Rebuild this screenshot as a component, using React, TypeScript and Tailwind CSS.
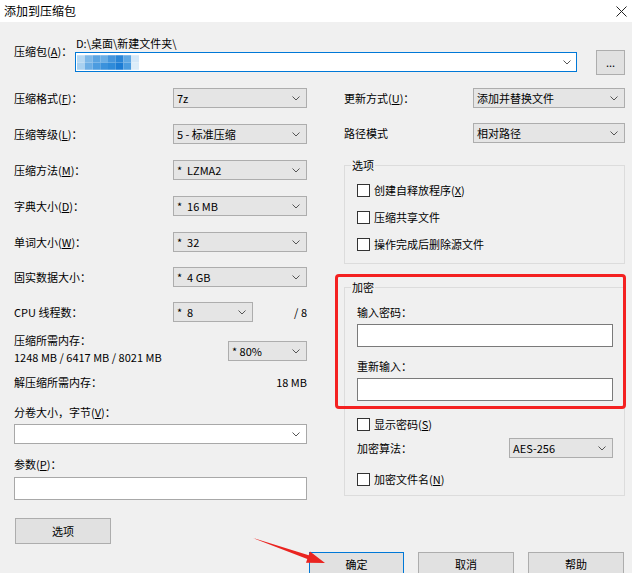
import React from 'react'

function Chevron() {
  return (
    <svg width="8" height="5" viewBox="0 0 8 5" className="shrink-0">
      <polyline points="0.5,0.5 4,4 7.5,0.5" fill="none" stroke="#555" strokeWidth="1" />
    </svg>
  )
}

function Select({ value, className }: { value: string; className: string }) {
  return (
    <div
      className={`flex h-[20px] items-center justify-between border border-[#adadad] bg-[#e5e5e5] pl-[3px] pr-[6px] ${className}`}
    >
      <span className="whitespace-pre">{value}</span>
      <Chevron />
    </div>
  )
}

function Check({ children }: { children: React.ReactNode }) {
  return (
    <div className="flex h-[14px] items-center">
      <span className="h-[13px] w-[13px] shrink-0 border border-[#333] bg-white" />
      <span className="ml-[4px]">{children}</span>
    </div>
  )
}

const mosaic = [
  ['#b6d8f2', '#7db8e8', '#5aa4e2', '#6aaee5', '#4596dd', '#2a86d8', '#5fa8e4', '#d4e8f8'],
  ['#a9d1f0', '#6caee5', '#4c9ce0', '#3b92dc', '#2f8bd9', '#1c7cd4', '#4a9ce0', '#dcedf9'],
]

function Mosaic() {
  return (
    <svg width="62" height="15" viewBox="0 0 64 15">
      {mosaic.map((row, r) =>
        row.map((c, i) => <rect key={`${r}-${i}`} x={i * 8} y={r * 7.5} width="8" height="7.5" fill={c} />)
      )}
    </svg>
  )
}

export default function App() {
  return (
    <div className="relative h-[573px] w-[632px] overflow-hidden bg-[#f0f0f0] font-['Noto_Sans_CJK_SC','Noto_Sans',sans-serif] text-[11px] text-black">
      {/* title bar */}
      <div className="flex h-[22px] items-center justify-between bg-white pl-[4px] pr-[5px] text-[12px]">
        <span>添加到压缩包</span>
        <svg width="11" height="11" viewBox="0 0 11 11">
          <path d="M0.5 0.5 L10.5 10.5 M10.5 0.5 L0.5 10.5" stroke="#222" strokeWidth="1" />
        </svg>
      </div>

      {/* archive path */}
      <div className="mt-[14px] flex pl-[14px]">
        <div className="w-[61px] pt-[8px] leading-[14px]">
          压缩包(<u>A</u>)：
        </div>
        <div className="w-[502px]">
          <div className="pl-[1px] leading-[14px]">{'D:\\桌面\\新建文件夹\\'}</div>
          <div className="mt-[2px] flex h-[20px] items-center justify-between border border-[#0078d7] bg-white pl-[1px] pr-[5px]">
            <Mosaic />
            <Chevron />
          </div>
        </div>
        <div className="ml-[19px] mt-[14px] flex h-[25px] w-[29px] items-center justify-center border border-[#adadad] bg-[#e1e1e1] leading-none">
          ...
        </div>
      </div>

      <div className="mt-[13px] flex pl-[14px]">
        {/* left column */}
        <div className="flex w-[293px] flex-col">
          <div className="flex h-[20px] items-center justify-between">
            <span>压缩格式(<u>F</u>)：</span>
            <Select className="w-[134px]" value="7z" />
          </div>
          <div className="mt-[16px] flex h-[20px] items-center justify-between">
            <span>压缩等级(<u>L</u>)：</span>
            <Select className="w-[134px]" value="5 - 标准压缩" />
          </div>
          <div className="mt-[16px] flex h-[20px] items-center justify-between">
            <span>压缩方法(<u>M</u>)：</span>
            <Select className="w-[134px]" value="*  LZMA2" />
          </div>
          <div className="mt-[16px] flex h-[20px] items-center justify-between">
            <span>字典大小(<u>D</u>)：</span>
            <Select className="w-[134px]" value="*  16 MB" />
          </div>
          <div className="mt-[16px] flex h-[20px] items-center justify-between">
            <span>单词大小(<u>W</u>)：</span>
            <Select className="w-[134px]" value="*  32" />
          </div>
          <div className="mt-[15px] flex h-[20px] items-center justify-between">
            <span>固实数据大小：</span>
            <Select className="w-[134px]" value="*  4 GB" />
          </div>
          <div className="mt-[15px] flex h-[20px] items-center">
            <span className="w-[159px]">CPU 线程数：</span>
            <Select className="w-[80px]" value="*  8" />
            <span className="flex-1 text-right">/ 8</span>
          </div>
          <div className="mt-[10px] flex items-start justify-between">
            <div className="leading-[17px]">
              <div>压缩所需内存：</div>
              <div>1248 MB / 6417 MB / 8021 MB</div>
            </div>
            <Select className="mt-[9px] w-[79px]" value="* 80%" />
          </div>
          <div className="mt-[8px] flex justify-between leading-[16px]">
            <span>解压缩所需内存：</span>
            <span>18 MB</span>
          </div>
          <div className="mt-[14px] leading-[16px]">
            分卷大小，字节(<u>V</u>)：
          </div>
          <div className="mt-[4px] flex h-[20px] items-center justify-end border border-[#a8a8a8] bg-white pr-[6px]">
            <Chevron />
          </div>
          <div className="mt-[12px] leading-[16px]">
            参数(<u>P</u>)：
          </div>
          <div className="mt-[5px] h-[23px] border border-[#a8a8a8] bg-white" />
          <div className="ml-[1px] mt-[18px] flex h-[26px] w-[96px] items-center justify-center border border-[#adadad] bg-[#e1e1e1]">
            选项
          </div>
        </div>

        {/* right column */}
        <div className="ml-[37px] flex w-[281px] flex-col">
          <div className="flex h-[20px] items-center justify-between">
            <span>更新方式(<u>U</u>)：</span>
            <Select className="w-[152px]" value="添加并替换文件" />
          </div>
          <div className="mt-[15px] flex h-[20px] items-center justify-between">
            <span>路径模式</span>
            <Select className="w-[152px]" value="相对路径" />
          </div>

          <fieldset className="mt-[14px] border border-[#dcdcdc] pb-[12px] pl-[6px] pr-[6px]">
            <legend className="px-[1px] leading-[16px]">选项</legend>
            <div className="pl-[6px]">
              <div className="mt-[10px]">
                <Check>
                  创建自释放程序(<u>X</u>)
                </Check>
              </div>
              <div className="mt-[13px]">
                <Check>压缩共享文件</Check>
              </div>
              <div className="mt-[13px]">
                <Check>操作完成后删除源文件</Check>
              </div>
            </div>
          </fieldset>

          <fieldset className="mt-[15px] border border-[#dcdcdc] pb-[9px] pl-[6px] pr-[6px]">
            <legend className="px-[1px] leading-[16px]">加密</legend>
            <div className="w-[262px] pl-[6px]">
              <div className="mt-[9px] leading-[16px]">输入密码：</div>
              <div className="mt-[4px] h-[23px] border border-[#7a7a7a] bg-white" />
              <div className="mt-[11px] leading-[16px]">重新输入：</div>
              <div className="mt-[4px] h-[23px] border border-[#7a7a7a] bg-white" />
              <div className="mt-[16px]">
                <Check>
                  显示密码(<u>S</u>)
                </Check>
              </div>
              <div className="mt-[7px] flex h-[20px] items-center justify-between">
                <span>加密算法：</span>
                <Select className="w-[104px]" value="AES-256" />
              </div>
              <div className="mt-[14px]">
                <Check>
                  加密文件名(<u>N</u>)
                </Check>
              </div>
            </div>
          </fieldset>
        </div>
      </div>

      {/* dialog buttons */}
      <div className="mt-[8px] flex justify-end gap-[14px] pr-[8px]">
        <div className="flex h-[24px] w-[95px] items-center justify-center border border-[#0078d7] bg-[#e1e1e1]">
          确定
        </div>
        <div className="flex h-[24px] w-[96px] items-center justify-center border border-[#adadad] bg-[#e1e1e1]">
          取消
        </div>
        <div className="flex h-[24px] w-[96px] items-center justify-center border border-[#adadad] bg-[#e1e1e1]">
          帮助
        </div>
      </div>

      {/* annotation: red frame + arrow */}
      <div className="pointer-events-none absolute left-[335px] top-[274px] h-[135px] w-[291px] rounded-[4px] border-[3px] border-[#f42121]" />
      <svg
        className="pointer-events-none absolute left-[250px] top-[533px]"
        width="80"
        height="36"
        viewBox="0 0 80 36"
      >
        <polygon points="3,5 58.7,22.2 60,18.4 75,30 56,29.8 57.3,26" fill="#ea2420" />
      </svg>
    </div>
  )
}
